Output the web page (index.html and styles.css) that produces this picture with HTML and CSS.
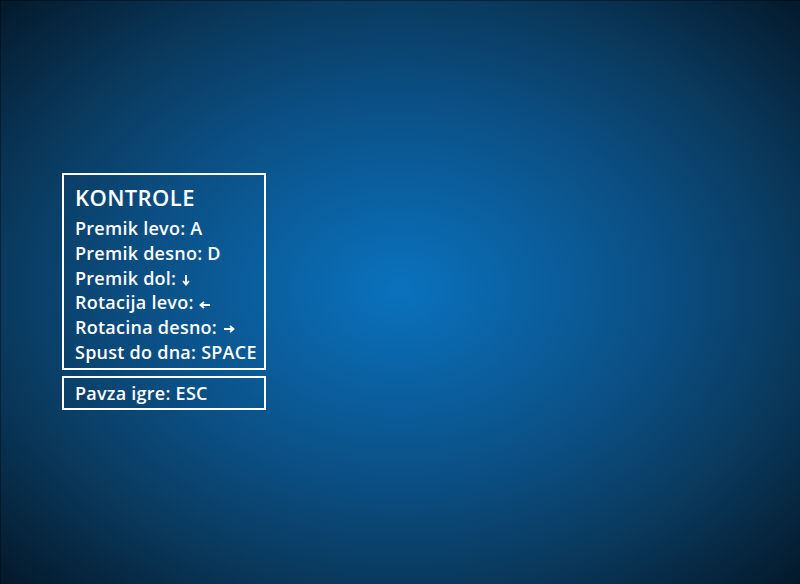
FILE: index.html
```html
<!DOCTYPE html>
<html>
<head>
<meta charset="utf-8">
<link rel="stylesheet" href="styles.css">
</head>
<body>
<div class="screen">
  <div class="panel">
    <div class="box controls">
      <div class="title">KONTROLE</div>
      <div class="line">Premik levo: A</div>
      <div class="line">Premik desno: D</div>
      <div class="line">Premik dol: <svg class="arrow" width="8" height="12" viewBox="0 0 8 12"><path d="M4 1 V10 M1 7 L4 10.5 L7 7" fill="none" stroke="#fff" stroke-width="1.8"/></svg></div>
      <div class="line">Rotacija levo: <svg class="arrow" width="12" height="8" viewBox="0 0 12 8"><path d="M11 4 H2 M5 1 L1.5 4 L5 7" fill="none" stroke="#fff" stroke-width="1.8"/></svg></div>
      <div class="line">Rotacina desno: <svg class="arrow" width="12" height="8" viewBox="0 0 12 8"><path d="M1 4 H10 M7 1 L10.5 4 L7 7" fill="none" stroke="#fff" stroke-width="1.8"/></svg></div>
      <div class="line">Spust do dna: SPACE</div>
    </div>
    <div class="box pause">
      <div class="line">Pavza igre: ESC</div>
    </div>
  </div>
</div>
</body>
</html>
```
FILE: styles.css
```css
html, body {
  margin: 0;
  padding: 0;
}
body {
  width: 800px;
  height: 584px;
  overflow: hidden;
  background-color: #04182a;
  font-family: "Open Sans", "Lato", sans-serif;
  color: #fff;
}
.screen {
  width: 800px;
  height: 584px;
  padding: 173px 0 0 62px;
  box-sizing: border-box;
  background: radial-gradient(ellipse farthest-corner at 400px 290px, #0a72be 0%, #0b4f84 46%, #0a3a5e 70%, #04182a 100%);
  box-shadow: inset 1px 1px 0 rgba(0, 0, 0, 0.35);
}
.panel {
  width: 204px;
  display: flex;
  flex-direction: column;
  gap: 6px;
}
.box {
  border: 2px solid #fff;
  padding: 0 0 0 11px;
}
.controls {
  height: 197px;
  box-sizing: border-box;
  padding-top: 8px;
}
.title {
  font-size: 22px;
  font-weight: 600;
  line-height: 28px;
  margin-bottom: 5px;
  letter-spacing: 0.4px;
}
.line {
  font-size: 18px;
  font-weight: 600;
  line-height: 24.8px;
  white-space: nowrap;
  letter-spacing: 0.25px;
}
.arrow {
  vertical-align: middle;
  margin-left: 1px;
}
.pause {
  height: 34px;
  box-sizing: border-box;
  padding-top: 3px;
}
```
